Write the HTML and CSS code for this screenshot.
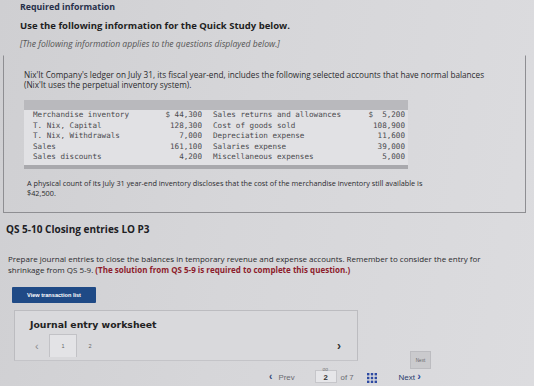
FILE: index.html
```html
<!DOCTYPE html>
<html lang="en">
<head>
<meta charset="UTF-8" />
<meta name="viewport" content="width=device-width, initial-scale=1" />
<title>QS 5-10 Closing entries</title>
<link rel="stylesheet" href="styles.css">
</head>
<body>

  <div class="required">
    <p class="req-label">Required information</p>
    <p class="req-title">Use the following information for the Quick Study below.</p>
    <p class="req-note">[The following information applies to the questions displayed below.]</p>
  </div>

  <div class="info-box">
    <p class="info-text">Nix'It Company's ledger on July 31, its fiscal year-end, includes the following selected accounts that have normal balances<br>(Nix'It uses the perpetual inventory system).</p>

    <table class="ledger">
      <colgroup>
        <col class="c-name"><col class="c-amt"><col class="c-name2"><col class="c-amt2">
      </colgroup>
      <thead>
        <tr><th colspan="4"></th></tr>
      </thead>
      <tbody>
        <tr><td>Merchandise inventory</td><td class="amt">$ 44,300</td><td>Sales returns and allowances</td><td class="amt">$&nbsp; 5,200</td></tr>
        <tr><td>T. Nix, Capital</td><td class="amt">128,300</td><td>Cost of goods sold</td><td class="amt">108,900</td></tr>
        <tr><td>T. Nix, Withdrawals</td><td class="amt">7,000</td><td>Depreciation expense</td><td class="amt">11,600</td></tr>
        <tr><td>Sales</td><td class="amt">161,100</td><td>Salaries expense</td><td class="amt">39,000</td></tr>
        <tr><td>Sales discounts</td><td class="amt">4,200</td><td>Miscellaneous expenses</td><td class="amt">5,000</td></tr>
      </tbody>
    </table>

    <p class="count-text">A physical count of its July 31 year-end inventory discloses that the cost of the merchandise inventory still available is<br>$42,500.</p>
  </div>

  <section class="question">
    <h2>QS 5-10 Closing entries LO P3</h2>
    <p class="prompt">Prepare journal entries to close the balances in temporary revenue and expense accounts. Remember to consider the entry for shrinkage from QS 5-9. <span class="warn">(The solution from QS 5-9 is required to complete this question.)</span></p>

    <button class="view-btn">View transaction list</button>

    <div class="work-row">
      <div class="worksheet">
        <h3>Journal entry worksheet</h3>
        <div class="tabs">
          <span class="arrow">&lsaquo;</span>
          <span class="tab active">1</span>
          <span class="tab">2</span>
          <span class="arrow right">&rsaquo;</span>
        </div>
      </div>
      <button class="next-small">Next</button>
    </div>
  </section>

  <nav class="pager">
    <span class="prev"><b>&lsaquo;</b> Prev</span>
    <span class="page-box"><small>oo</small>2</span>
    <span class="of">of 7</span>
    <svg class="grid" width="10" height="10" viewBox="0 0 10 10">
      <rect x="0" y="0" width="2.4" height="2.4" /><rect x="3.8" y="0" width="2.4" height="2.4" /><rect x="7.6" y="0" width="2.4" height="2.4" />
      <rect x="0" y="3.8" width="2.4" height="2.4" /><rect x="3.8" y="3.8" width="2.4" height="2.4" /><rect x="7.6" y="3.8" width="2.4" height="2.4" />
      <rect x="0" y="7.6" width="2.4" height="2.4" /><rect x="3.8" y="7.6" width="2.4" height="2.4" /><rect x="7.6" y="7.6" width="2.4" height="2.4" />
    </svg>
    <span class="next">Next <b>&rsaquo;</b></span>
  </nav>

</body>
</html>
```

FILE: styles.css
```css
body {
  margin: 0;
  width: 534px;
  height: 386px;
  overflow: hidden;
  font-family: "Open Sans", Arial, sans-serif;
  color: #2b2b2e;
  background: linear-gradient(100deg, #cfcfd2 0%, #d6d6d9 45%, #dcdcdf 100%);
}
p {
  margin: 0;
}
.required {
  padding: 2px 0 0 20px;
}
.req-label {
  font-size: 8.8px;
  font-weight: 700;
  line-height: 11px;
  color: #27304a;
}
.req-title {
  margin-top: 7px;
  font-size: 9.5px;
  font-weight: 700;
  line-height: 12px;
  color: #1e1e22;
}
.req-note {
  margin-top: 7px;
  font-size: 8.6px;
  font-style: italic;
  line-height: 11px;
  color: #555;
}
.info-box {
  margin: 5px 8px 0 3px;
  padding: 14px 0 14px 20px;
  border: 1px solid #8e8e92;
  border-top-color: transparent;
}
.info-text {
  font-size: 8.2px;
  line-height: 10px;
}
.count-text {
  margin-top: 9px;
  padding-left: 3px;
  font-size: 7.3px;
  line-height: 10px;
}
.ledger {
  margin-top: 10px;
  width: 384px;
  table-layout: fixed;
  border-collapse: collapse;
  font-family: "DejaVu Sans Mono", "Liberation Mono", monospace;
  font-size: 7.6px;
  color: #4a4a4e;
}
.c-name { width: 124px; }
.c-amt { width: 54px; }
.c-name2 { width: 153px; }
.c-amt2 { width: 53px; }
.ledger th {
  height: 10px;
  padding: 0;
  background: #b9b9bd;
}
.ledger tbody tr {
  background: #e1e1e4;
  height: 10.6px;
}
.ledger tbody tr:last-child td {
  padding-bottom: 3px;
  border-bottom: 4px solid #a9a9ad;
}
.ledger td {
  padding: 0 0 0 9px;
  white-space: pre;
  overflow: hidden;
  line-height: 10px;
}
.ledger td:nth-child(3) {
  padding-left: 11px;
}
.ledger td.amt {
  text-align: right;
  padding: 0;
}
.ledger td:last-child {
  padding-right: 3px;
}
.question {
  padding: 0 0 0 6px;
}
.question h2 {
  margin: 10px 0 0;
  font-size: 10px;
  font-weight: 700;
  line-height: 12px;
  color: #202024;
}
.prompt {
  margin: 19px 0 0 2px;
  width: 484px;
  font-size: 8px;
  line-height: 10.5px;
}
.warn {
  font-weight: 700;
  color: #8d1c2c;
}
.view-btn {
  display: block;
  margin: 12px 0 0 6px;
  width: 84px;
  height: 16px;
  padding: 0;
  border: none;
  border-radius: 1px;
  background: #1f4a86;
  color: #fff;
  font-family: "Liberation Sans", Arial, sans-serif;
  font-size: 5.6px;
  font-weight: 700;
}
.work-row {
  display: flex;
  align-items: flex-end;
  margin-top: 7px;
}
.worksheet {
  margin-left: 8px;
  width: 344px;
  height: 51px;
  border: 1px solid #bcbcc0;
  border-bottom: 1px solid #c4c4c8;
  background: #d9d9dc;
  box-sizing: border-box;
}
.worksheet h3 {
  margin: 9px 0 0 15px;
  font-family: "DejaVu Sans", Verdana, sans-serif;
  font-size: 9.3px;
  font-weight: 700;
  line-height: 10px;
  color: #222;
}
.tabs {
  display: flex;
  align-items: flex-end;
  height: 23px;
  margin-top: 4px;
  padding-left: 20px;
  font-family: "Liberation Sans", Arial, sans-serif;
  font-size: 5.5px;
  color: #666;
}
.arrow {
  align-self: center;
  font-size: 11px;
  color: #8a8a8e;
  width: 14px;
}
.arrow.right {
  margin-left: auto;
  margin-right: 16px;
  width: auto;
  font-size: 12px;
  font-weight: 700;
  color: #333;
}
.tab {
  display: flex;
  align-items: center;
  justify-content: center;
  width: 26px;
  height: 22px;
}
.tab.active {
  border: 1px solid #c2c2c6;
  border-bottom: none;
  background: #e3e3e6;
}
.next-small {
  margin: 0 0 -8px 52px;
  width: 21px;
  height: 18px;
  padding: 0;
  border: 1px solid #bcbcc0;
  background: #cacacd;
  color: #666;
  font-family: "Liberation Sans", Arial, sans-serif;
  font-size: 4.6px;
}
.pager {
  display: flex;
  align-items: flex-end;
  margin: 9px 0 0 269px;
  font-family: "Liberation Sans", Arial, sans-serif;
  font-size: 7.8px;
  line-height: 10px;
  color: #6a6a70;
}
.prev b {
  color: #2c3f73;
  font-size: 10px;
  margin-right: 4px;
}
.page-box {
  position: relative;
  margin-left: 20px;
  width: 22px;
  height: 13px;
  padding-top: 2px;
  box-sizing: border-box;
  background: #e6e6e9;
  border: 1px solid #c6c6ca;
  text-align: center;
  color: #333;
  font-weight: 700;
}
.page-box small {
  position: absolute;
  top: -4px;
  left: 7px;
  font-size: 5px;
  line-height: 5px;
  font-weight: 400;
  color: #777;
}
.of {
  margin-left: 4px;
}
.grid {
  margin: 0 0 0 13px;
  fill: #2d4aa2;
}
.next {
  margin-left: 22px;
  color: #2a3c6c;
  font-size: 8px;
}
.next b {
  font-size: 11px;
  color: #2c4a9a;
}
```
